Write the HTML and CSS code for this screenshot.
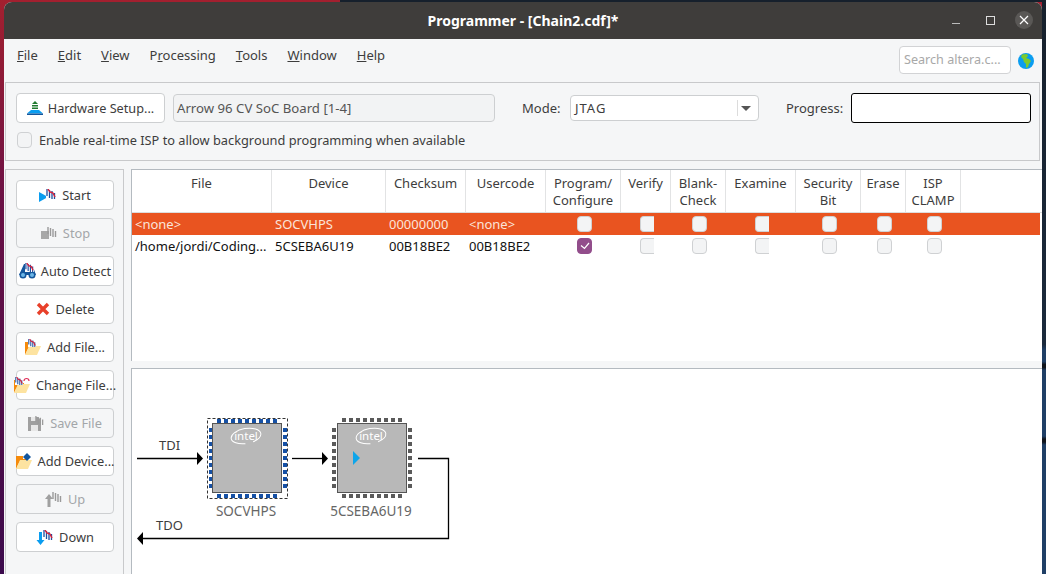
FILE: index.html
```html
<!DOCTYPE html>
<html lang="en">
<head>
    <meta charset="UTF-8">
    <meta name="viewport" content="width=device-width, initial-scale=1.0">
    <title>Programmer - [Chain2.cdf]*</title>
    <link rel="stylesheet" href="styles.css">
</head>
<body>
    <svg class="defs" width="0" height="0">
        <defs>
            <symbol id="chain" viewBox="0 0 10 10">
                <rect x="0" y="0" width="10" height="10" fill="#fff"/>
                <path d="M1 0v7M3.5 1v8M6 2v8M8.5 4v6" stroke="#1c4fa0" stroke-width="1.3"/>
                <path d="M2 0l2 3 3 1 2 4" stroke="#d8203a" stroke-width="1.4" fill="none"/>
            </symbol>
            <symbol id="chain-off" viewBox="0 0 10 10">
                <path d="M1 0v7M3.5 1v8M6 2v8M8.5 4v6" stroke="#9a9a9a" stroke-width="1.4"/>
            </symbol>
            <symbol id="folder" viewBox="0 0 16 13">
                <path d="M0 0h7v3h3v2H4L0 13z" fill="#f58a0b"/>
                <path d="M4 4h12l-4 9H0z" fill="#fde3a0"/>
            </symbol>
        </defs>
    </svg>

    <div class="window">
        <div class="titlebar">
            <span class="title">Programmer - [Chain2.cdf]*</span>
            <div class="win-controls">
                <span class="win-min"></span>
                <span class="win-max"></span>
                <span class="win-close">
                    <svg width="10" height="10" viewBox="0 0 10 10"><path d="M1 1l8 8M9 1l-8 8" stroke="#fff" stroke-width="1.2"/></svg>
                </span>
            </div>
        </div>

        <div class="menubar">
            <nav class="menu">
                <span><u>F</u>ile</span>
                <span><u>E</u>dit</span>
                <span><u>V</u>iew</span>
                <span>P<u>r</u>ocessing</span>
                <span><u>T</u>ools</span>
                <span><u>W</u>indow</span>
                <span><u>H</u>elp</span>
            </nav>
            <div class="search">Search altera.c...</div>
            <svg class="globe" width="16" height="16" viewBox="0 0 16 16">
                <circle cx="8" cy="8" r="8" fill="#0a9df0"/>
                <path d="M4 1.5l5-.5 1 2-2 2 3 1 2 2-2 3-1 3-2 1 0-4-2-2-1-3-2-2z" fill="#7ccb2e"/>
            </svg>
        </div>

        <div class="hw-group">
            <div class="hw-row">
                <button class="btn hw-btn">
                    <svg width="16" height="15" viewBox="0 0 16 15">
                        <path d="M8 0l3 3H5z" fill="#1f7a2f"/>
                        <path d="M5 4h6v1.500H5zM5 6.500h6V8H5z" fill="#1f7a2f"/>
                        <path d="M4 9h8l4 3.500H0z" fill="#0a9df0"/>
                        <path d="M0 12.500h16V14H0z" fill="#14569c"/>
                    </svg>
                    Hardware Setup...
                </button>
                <div class="hw-field">Arrow 96 CV SoC Board [1-4]</div>
                <span class="mode-label">Mode:</span>
                <div class="mode-select">
                    <span class="mode-value">JTAG</span>
                    <span class="mode-arrow"></span>
                </div>
                <span class="progress-label">Progress:</span>
                <div class="progress-box"></div>
            </div>
            <div class="isp-row">
                <span class="check check-plain"></span>
                <span>Enable real-time ISP to allow background programming when available</span>
            </div>
        </div>

        <div class="main">
            <aside class="side">
                <button class="btn side-btn">
                    <svg class="ico" width="17" height="13" viewBox="0 0 17 13"><path d="M0 3l9 5-9 5z" fill="#0a9df0"/><use href="#chain" x="7" y="0" width="10" height="10"/></svg>
                    Start
                </button>
                <button class="btn side-btn off">
                    <svg class="ico" width="17" height="13" viewBox="0 0 17 13"><rect x="1" y="4" width="8" height="8" fill="#a8a8a8"/><use href="#chain-off" x="7" y="0" width="10" height="10"/></svg>
                    Stop
                </button>
                <button class="btn side-btn detect">
                    <svg class="ico" width="17" height="16" viewBox="0 0 17 16">
                        <path d="M5 1h3v4h2V1h3l4 11H0z" fill="#14569c"/>
                        <circle cx="4" cy="12" r="3.500" fill="#14569c"/><circle cx="13" cy="12" r="3.500" fill="#14569c"/>
                        <circle cx="4" cy="12" r="2" fill="#6bb6e8"/><circle cx="13" cy="12" r="2" fill="#6bb6e8"/>
                        <use href="#chain" x="6" y="0" width="9" height="9"/>
                    </svg>
                    Auto Detect
                </button>
                <button class="btn side-btn">
                    <svg class="ico" width="14" height="14" viewBox="0 0 14 14"><path d="M2 2l10 10M12 2L2 12" stroke="#e8402a" stroke-width="3.400"/></svg>
                    Delete
                </button>
                <button class="btn side-btn">
                    <svg class="ico" width="16" height="16" viewBox="0 0 16 16"><use href="#folder" x="0" y="3" width="16" height="13"/><use href="#chain" x="3" y="0" width="8" height="8"/></svg>
                    Add File...
                </button>
                <button class="btn side-btn">
                    <svg class="ico" width="16" height="16" viewBox="0 0 16 16"><use href="#folder" x="0" y="3" width="16" height="13"/><use href="#chain" x="1" y="0" width="8" height="8"/><path d="M10 4a2.500 2.500 0 0 1 5 0" stroke="#e0305a" stroke-width="1.200" fill="none"/></svg>
                    Change File...
                </button>
                <button class="btn side-btn off">
                    <svg class="ico" width="16" height="15" viewBox="0 0 16 15"><path d="M0 1h10l3 3v11H0z" fill="#a0a0a0"/><rect x="3" y="9" width="7" height="6" fill="#e8e8e8"/><rect x="3" y="1" width="5" height="4" fill="#e8e8e8"/><use href="#chain-off" x="7" y="0" width="9" height="9"/></svg>
                    Save File
                </button>
                <button class="btn side-btn">
                    <svg class="ico" width="16" height="16" viewBox="0 0 16 16"><use href="#folder" x="0" y="3" width="16" height="13"/><path d="M11 0l4 4-4 4-4-4z" fill="#14569c"/></svg>
                    Add Device...
                </button>
                <button class="btn side-btn off">
                    <svg class="ico" width="17" height="15" viewBox="0 0 17 15"><path d="M4 2l4 5H5.500v8h-3V7H0z" fill="#a0a0a0"/><use href="#chain-off" x="7" y="0" width="10" height="10"/></svg>
                    Up
                </button>
                <button class="btn side-btn">
                    <svg class="ico" width="17" height="15" viewBox="0 0 17 15"><path d="M3 2h3v8h2.500l-4 5-4-5H3z" fill="#0a9df0"/><use href="#chain" x="7" y="0" width="10" height="10"/></svg>
                    Down
                </button>
            </aside>

            <div class="content">
                <section class="table-panel">
                    <div class="row head">
                        <div class="cell c-file">File</div>
                        <div class="cell c-dev">Device</div>
                        <div class="cell c-sum">Checksum</div>
                        <div class="cell c-code">Usercode</div>
                        <div class="cell c-prog">Program/<br>Configure</div>
                        <div class="cell c-ver">Verify</div>
                        <div class="cell c-blank">Blank-<br>Check</div>
                        <div class="cell c-exam">Examine</div>
                        <div class="cell c-sec">Security<br>Bit</div>
                        <div class="cell c-erase">Erase</div>
                        <div class="cell c-isp">ISP<br>CLAMP</div>
                    </div>
                    <div class="row data selected">
                        <div class="cell c-file">&lt;none&gt;</div>
                        <div class="cell c-dev">SOCVHPS</div>
                        <div class="cell c-sum">00000000</div>
                        <div class="cell c-code">&lt;none&gt;</div>
                        <div class="cell c-prog"><span class="check"></span></div>
                        <div class="cell c-ver"><span class="check clip"></span></div>
                        <div class="cell c-blank"><span class="check"></span></div>
                        <div class="cell c-exam"><span class="check clip"></span></div>
                        <div class="cell c-sec"><span class="check"></span></div>
                        <div class="cell c-erase"><span class="check"></span></div>
                        <div class="cell c-isp"><span class="check"></span></div>
                    </div>
                    <div class="row data">
                        <div class="cell c-file">/home/jordi/Coding...</div>
                        <div class="cell c-dev">5CSEBA6U19</div>
                        <div class="cell c-sum">00B18BE2</div>
                        <div class="cell c-code">00B18BE2</div>
                        <div class="cell c-prog">
                            <span class="check checked">
                                <svg width="10" height="8" viewBox="0 0 10 8"><path d="M1 3.500l3.500 3L9 1" stroke="#fff" stroke-width="1.200" fill="none"/></svg>
                            </span>
                        </div>
                        <div class="cell c-ver"><span class="check clip"></span></div>
                        <div class="cell c-blank"><span class="check"></span></div>
                        <div class="cell c-exam"><span class="check clip"></span></div>
                        <div class="cell c-sec"><span class="check"></span></div>
                        <div class="cell c-erase"><span class="check"></span></div>
                        <div class="cell c-isp"><span class="check"></span></div>
                    </div>
                </section>

                <div class="splitter"></div>

                <section class="diagram">
                    <svg class="chain-svg" width="911" height="206" viewBox="131 368 911 206">
                        <g stroke="#000" stroke-width="1.300" fill="none">
                            <path d="M137 458.500H198"/>
                            <path d="M292 458.500H323"/>
                            <path d="M418 458.500H448.500V538.500H142"/>
                        </g>
                        <path d="M197 452l6 6.500-6 6.500zM322 452l6 6.500-6 6.500zM143 532l-6 6.500 6 6.500z" fill="#000"/>

                        <text class="d-label" x="159" y="450">TDI</text>
                        <text class="d-label" x="156" y="530">TDO</text>

                        <rect x="207.500" y="418.500" width="80" height="80" fill="none" stroke="#333" stroke-dasharray="3 2"/>
                        <g fill="#1550a5">
                            <path d="M217 419h4v4h-4zM224 419h4v4h-4zM231 419h4v4h-4zM238 419h4v4h-4zM245 419h4v4h-4zM252 419h4v4h-4zM259 419h4v4h-4zM266 419h4v4h-4zM273 419h4v4h-4z"/>
                            <path d="M217 494h4v4h-4zM224 494h4v4h-4zM231 494h4v4h-4zM238 494h4v4h-4zM245 494h4v4h-4zM252 494h4v4h-4zM259 494h4v4h-4zM266 494h4v4h-4zM273 494h4v4h-4z"/>
                            <path d="M209 428h4v4h-4zM209 435h4v4h-4zM209 442h4v4h-4zM209 449h4v4h-4zM209 456h4v4h-4zM209 463h4v4h-4zM209 470h4v4h-4zM209 477h4v4h-4zM209 484h4v4h-4z"/>
                            <path d="M283 428h4v4h-4zM283 435h4v4h-4zM283 442h4v4h-4zM283 449h4v4h-4zM283 456h4v4h-4zM283 463h4v4h-4zM283 470h4v4h-4zM283 477h4v4h-4zM283 484h4v4h-4z"/>
                        </g>
                        <rect x="212.500" y="423.500" width="69" height="69" fill="#b8b8b8" stroke="#555"/>
                        <g class="intel" transform="translate(246 436)">
                            <ellipse cx="0" cy="0" rx="15" ry="7.500" transform="rotate(-10)" fill="none" stroke="#fff" stroke-width="1" stroke-dasharray="62 8" stroke-dashoffset="-20"/>
                            <text x="0" y="3.500">intel</text>
                        </g>
                        <text class="d-label mid" x="246" y="516">SOCVHPS</text>

                        <g fill="#5a5a5a">
                            <path d="M342 418h4v4h-4zM349 418h4v4h-4zM356 418h4v4h-4zM363 418h4v4h-4zM370 418h4v4h-4zM377 418h4v4h-4zM384 418h4v4h-4zM391 418h4v4h-4zM398 418h4v4h-4z"/>
                            <path d="M342 494h4v4h-4zM349 494h4v4h-4zM356 494h4v4h-4zM363 494h4v4h-4zM370 494h4v4h-4zM377 494h4v4h-4zM384 494h4v4h-4zM391 494h4v4h-4zM398 494h4v4h-4z"/>
                            <path d="M332 428h4v4h-4zM332 435h4v4h-4zM332 442h4v4h-4zM332 449h4v4h-4zM332 456h4v4h-4zM332 463h4v4h-4zM332 470h4v4h-4zM332 477h4v4h-4zM332 484h4v4h-4z"/>
                            <path d="M408 428h4v4h-4zM408 435h4v4h-4zM408 442h4v4h-4zM408 449h4v4h-4zM408 456h4v4h-4zM408 463h4v4h-4zM408 470h4v4h-4zM408 477h4v4h-4zM408 484h4v4h-4z"/>
                        </g>
                        <rect x="337.500" y="423.500" width="69" height="69" fill="#b8b8b8" stroke="#555"/>
                        <g class="intel" transform="translate(371 436)">
                            <ellipse cx="0" cy="0" rx="15" ry="7.500" transform="rotate(-10)" fill="none" stroke="#fff" stroke-width="1" stroke-dasharray="62 8" stroke-dashoffset="-20"/>
                            <text x="0" y="3.500">intel</text>
                        </g>
                        <path d="M353 451l7 7-7 7z" fill="#0ea5ea"/>
                        <text class="d-label mid" x="371" y="516">5CSEBA6U19</text>
                    </svg>
                </section>
            </div>
        </div>
    </div>
</body>
</html>
```

FILE: styles.css
```css
html, body {
    margin: 0;
    height: 574px;
    overflow: hidden;
}
body {
    font-family: "Noto Sans", "Open Sans", sans-serif;
    font-size: 13px;
    color: #3d3d3d;
    background: linear-gradient(180deg, #a3202f 0%, #6b1145 35%, #3b0a4c 100%);
    padding: 2px 4px 0 4px;
    box-sizing: border-box;
    position: relative;
}
/* bits of the desktop behind the window */
body::before {
    content: "";
    position: absolute;
    top: 0;
    right: 0;
    width: 4px;
    height: 574px;
    background: linear-gradient(180deg, #16202c 0, #1b2a3c 60%, #1f3f66 61%, #1f3f66 63%, #10151c 63.500%, #10151c 64%, #1f3f66 64.500%, #1f3f66 76%, #10151c 76.500%, #10151c 77%, #1f3f66 77.500%, #1f3f66 100%);
}
body::after {
    content: "";
    position: absolute;
    top: 0;
    left: 340px;
    right: 0;
    height: 2px;
    background: #16202c;
}
.defs {
    position: absolute;
}
.window {
    position: relative;
    z-index: 1;
    width: 1038px;
    height: 572px;
    background: #f5f6f7;
    border-radius: 8px 8px 0 0;
    overflow: hidden;
    display: flex;
    flex-direction: column;
}
button {
    font: inherit;
    color: inherit;
}

/* title bar */
.titlebar {
    height: 37px;
    flex: none;
    background: #3f3d3b;
    display: flex;
    align-items: center;
    justify-content: center;
    position: relative;
}
.title {
    color: #fff;
    font-weight: 700;
    font-size: 14px;
}
.win-controls {
    position: absolute;
    right: 9px;
    top: 9px;
    display: flex;
    align-items: center;
    gap: 20px;
}
.win-min {
    width: 8px;
    height: 1px;
    background: #bbb;
    margin-top: 6px;
    margin-right: 6px;
}
.win-max {
    width: 7px;
    height: 7px;
    border: 1px solid #ddd;
}
.win-close {
    width: 18px;
    height: 18px;
    border-radius: 50%;
    background: #5a5856;
    display: flex;
    align-items: center;
    justify-content: center;
}

/* menu */
.menubar {
    height: 43px;
    flex: none;
    display: flex;
    align-items: center;
    padding: 0 8px 0 13px;
    box-sizing: border-box;
}
.menu {
    display: flex;
    gap: 20px;
    flex: 1;
    margin-top: -12px;
}
.search {
    width: 112px;
    height: 28px;
    box-sizing: border-box;
    border: 1px solid #d2d3d5;
    border-radius: 4px;
    background: #fff;
    color: #a8a8a8;
    font-size: 12.600px;
    line-height: 26px;
    padding-left: 4px;
    white-space: nowrap;
    overflow: hidden;
    margin-top: -1px;
}
.globe {
    margin: 0 0 0 7px;
}

/* hardware box */
.hw-group {
    height: 79px;
    flex: none;
    margin-left: 1px;
    margin-right: 2px;
    border: 1px solid #c8c9cb;
    box-sizing: border-box;
    padding: 10px 5px 0 10px;
}
.hw-row {
    display: flex;
    align-items: center;
    height: 30px;
}
.btn {
    background: #fff;
    border: 1px solid #cdcfd1;
    border-radius: 4px;
    padding: 0;
    display: flex;
    align-items: center;
    justify-content: center;
    white-space: nowrap;
}
.hw-btn {
    width: 149px;
    height: 30px;
    gap: 5px;
    font-size: 12.700px;
}
.hw-field {
    margin-left: 8px;
    width: 322px;
    height: 28px;
    box-sizing: border-box;
    border: 1px solid #cdcfd1;
    border-radius: 4px;
    background: #f2f3f4;
    font-size: 13.200px;
    line-height: 26px;
    padding-left: 3px;
    color: #555;
}
.mode-label {
    margin-left: 27px;
    width: 48px;
}
.mode-select {
    width: 189px;
    height: 26px;
    box-sizing: border-box;
    border: 1px solid #cdcfd1;
    border-radius: 4px;
    background: #fff;
    display: flex;
    align-items: center;
    padding-left: 4px;
}
.mode-value {
    flex: 1;
    letter-spacing: 1px;
}
.mode-arrow {
    width: 20px;
    height: 16px;
    border-left: 1px solid #dcdcdc;
    position: relative;
}
.mode-arrow::after {
    content: "";
    position: absolute;
    left: 3px;
    top: 6px;
    border-style: solid;
    border-width: 5px 5px 0;
    border-color: #555 transparent transparent;
}
.progress-label {
    margin-left: 27px;
    width: 65px;
}
.progress-box {
    width: 180px;
    height: 30px;
    box-sizing: border-box;
    border: 1px solid #000;
    border-radius: 3px;
    background: #fff;
}
.isp-row {
    display: flex;
    align-items: center;
    gap: 7px;
    margin-top: 8px;
    padding-left: 1px;
    font-size: 12.800px;
}

/* checkboxes */
.check {
    display: inline-flex;
    align-items: center;
    justify-content: center;
    width: 15px;
    height: 16px;
    box-sizing: border-box;
    border: 1px solid #cfd1d3;
    border-radius: 4px;
    background: #f3f4f5;
}
.check.clip {
    width: 14px;
    border-right: 0;
    border-radius: 4px 0 0 4px;
}
.check.checked {
    background: #924d8b;
    border-color: #924d8b;
}

/* main area */
.main {
    flex: 1;
    display: flex;
    padding-top: 8px;
    min-height: 0;
}
.side {
    width: 119px;
    margin-left: 1px;
    box-sizing: border-box;
    flex: none;
    border-top: 1px solid #c8c9cb;
    border-left: 1px solid #c8c9cb;
    border-right: 1px solid #c8c9cb;
    padding: 10px 0 0 10px;
    display: flex;
    flex-direction: column;
    gap: 8px;
}
.side-btn {
    width: 98px;
    height: 30px;
    flex: none;
    gap: 6px;
    font-size: 12.800px;
}
.side-btn.detect {
    gap: 5px;
    font-size: 12.700px;
}
.side-btn.off {
    color: #a3a6a9;
    background: #f5f6f7;
}
.ico {
    flex: none;
}
.content {
    margin-left: 7px;
    width: 911px;
    display: flex;
    flex-direction: column;
}

/* device table */
.table-panel {
    height: 192px;
    flex: none;
    background: #fff;
    border-top: 1px solid #b4bac0;
    border-left: 1px solid #b4bac0;
    box-sizing: border-box;
}
.row {
    display: flex;
}
.row.head {
    height: 43px;
    box-sizing: border-box;
    border-bottom: 1px solid #ddd;
    text-align: center;
    line-height: 17px;
}
.head .cell {
    border-right: 1px solid #e2e3e4;
    padding-top: 5px;
}
.row.data {
    height: 22px;
    line-height: 22px;
    color: #111;
}
.row.selected {
    background: #e95420;
    color: #fbe4da;
    margin-right: 2px;
}
.cell {
    box-sizing: border-box;
    flex: none;
    white-space: nowrap;
}
.data .cell {
    display: flex;
    align-items: center;
    padding-left: 3px;
}
.c-file { width: 140px; }
.c-dev { width: 114px; }
.c-sum { width: 80px; }
.c-code { width: 80px; }
.c-prog { width: 75px; }
.c-ver { width: 50px; }
.c-blank { width: 55px; }
.c-exam { width: 70px; }
.c-sec { width: 65px; }
.c-erase { width: 45px; }
.c-isp { width: 55px; }
.data .c-prog { padding-left: 31px; }
.data .c-ver { padding-left: 19px; }
.data .c-blank { padding-left: 21px; }
.data .c-exam { padding-left: 29px; }
.data .c-sec { padding-left: 26px; }
.data .c-erase { padding-left: 16px; }
.data .c-isp { padding-left: 21px; }
.splitter {
    height: 7px;
    flex: none;
}

/* chain diagram */
.diagram {
    flex: 1;
    background: #fff;
    border-top: 1px solid #b4bac0;
    border-left: 1px solid #b4bac0;
    box-sizing: border-box;
    position: relative;
    overflow: hidden;
}
.chain-svg {
    position: absolute;
    left: -1px;
    top: -1px;
}
.d-label {
    font-size: 13px;
    fill: #3d3d3d;
}
.d-label.mid {
    font-size: 13.500px;
    text-anchor: middle;
    fill: #666;
}
.intel text {
    font-size: 11.500px;
    fill: #fff;
    text-anchor: middle;
}
```
